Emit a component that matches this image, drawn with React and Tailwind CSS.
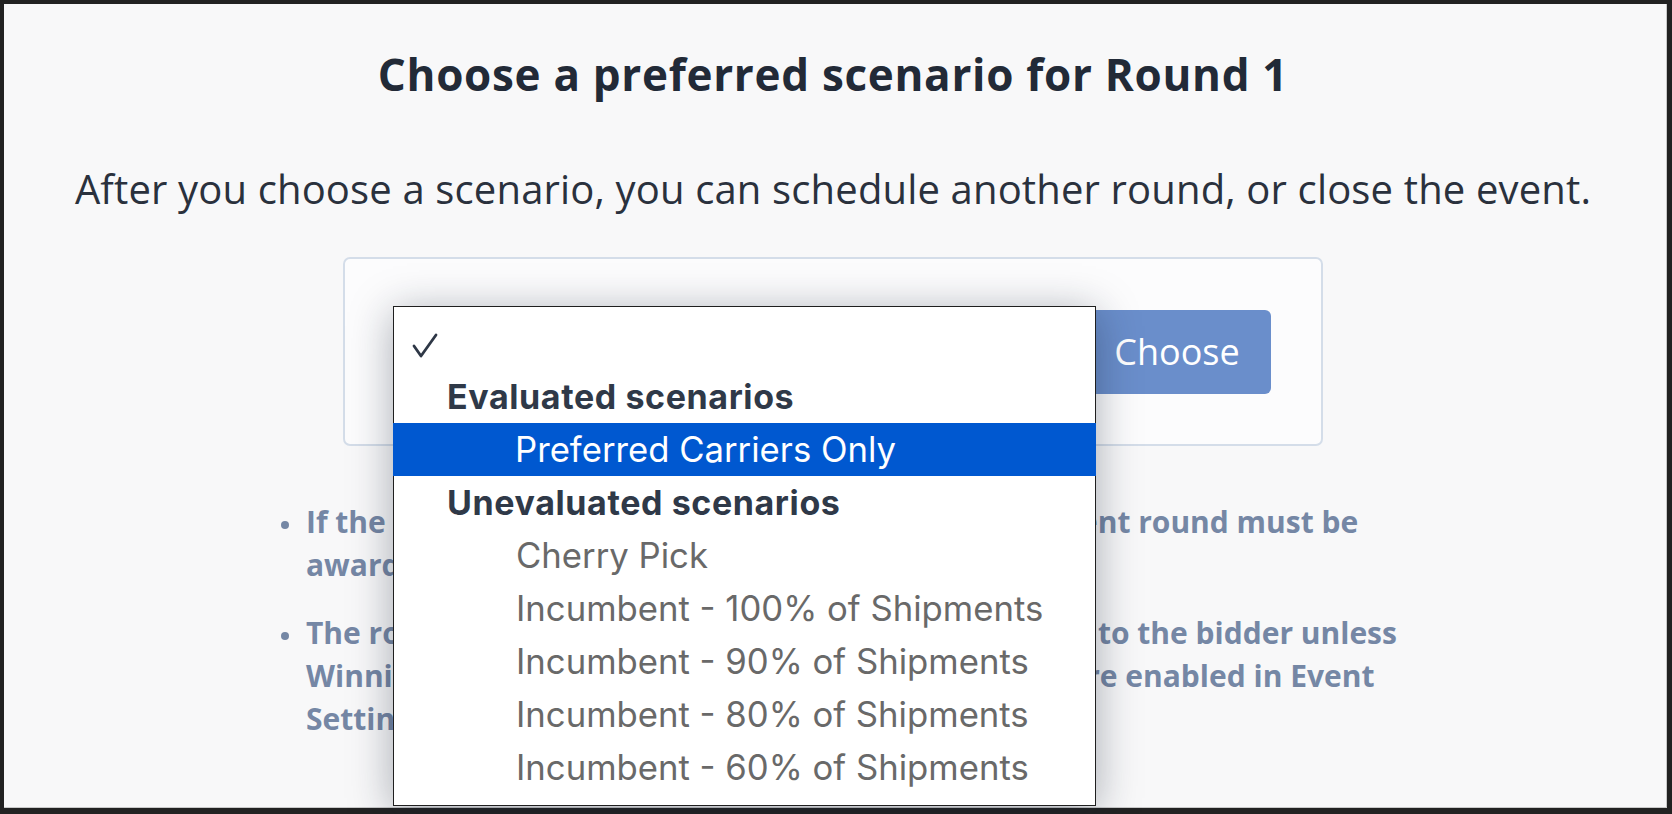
import React from 'react';

const OPTIONS = [
  { kind: 'check' },
  { kind: 'group', label: 'Evaluated scenarios' },
  { kind: 'item', label: 'Preferred Carriers Only', selected: true },
  { kind: 'group', label: 'Unevaluated scenarios' },
  { kind: 'item', label: 'Cherry Pick' },
  { kind: 'item', label: 'Incumbent - 100% of Shipments' },
  { kind: 'item', label: 'Incumbent - 90% of Shipments' },
  { kind: 'item', label: 'Incumbent - 80% of Shipments' },
  { kind: 'item', label: 'Incumbent - 60% of Shipments' },
];

function CheckMark() {
  return (
    <svg width="26" height="26" viewBox="0 0 26 26" fill="none">
      <polyline points="2,13 9,23 24,2" stroke="#2e3746" strokeWidth="2.8" strokeLinecap="round" strokeLinejoin="round" />
    </svg>
  );
}

function ScenarioMenu() {
  return (
    <div
      className="absolute left-[48px] top-[47px] z-10 w-[703px] h-[500px] bg-white border border-[#1f1f1f] pt-[10px] pb-[12px] shadow-[0_6px_40px_rgba(20,30,50,0.36)]"
      style={{ fontFamily: 'Inter, "Liberation Sans", sans-serif' }}
    >
      {OPTIONS.map((opt, i) => {
        if (opt.kind === 'check') {
          return (
            <div key={i} className="h-[53px] flex items-center pl-[18px] pt-[4px]">
              <CheckMark />
            </div>
          );
        }
        if (opt.kind === 'group') {
          return (
            <div key={i} className="h-[53px] flex items-center pl-[53px] text-[34px] font-bold text-[#2f3948] tracking-[0.6px]">
              {opt.label}
            </div>
          );
        }
        return (
          <div
            key={i}
            className={
              opt.selected
                ? 'h-[53px] flex items-center pl-[122px] text-[34.7px] text-white bg-[#0058d0] -mx-px'
                : 'h-[53px] flex items-center pl-[122px] text-[34.7px] text-[#696969]'
            }
          >
            {opt.label}
          </div>
        );
      })}
    </div>
  );
}

function ChooseCard() {
  return (
    <div className="relative mt-[40px] w-[980px] h-[189px] border-2 border-[#d4dde9] rounded-[7px] bg-[#fcfcfd]">
      <div className="h-full flex items-center px-[50px] gap-[23px]">
        <div className="flex-1 h-[84px] rounded-[6px] border border-[#c9d2de] bg-white" />
        <button className="w-[188px] h-[84px] rounded-[6px] bg-[#6a8ecb] text-white text-[36px] leading-none">
          Choose
        </button>
      </div>
      <ScenarioMenu />
    </div>
  );
}

function Note({ children }) {
  return (
    <li className="flex items-start gap-[17px]">
      <span className="mt-[21px] w-[8px] h-[8px] rounded-full bg-[#7587a5] shrink-0" />
      <span className="whitespace-nowrap">{children}</span>
    </li>
  );
}

export default function App() {
  return (
    <div
      className="h-screen w-full bg-[#222222] border-t-[4px] border-l-[4px] border-r-[5px] border-b-[6px] border-[#222222]"
      style={{ fontFamily: '"Open Sans", "Noto Sans", sans-serif' }}
    >
      <div className="h-full bg-[#f8f8f9] border-r border-b border-[#c9c9c9] flex flex-col items-center pr-[4px]">
        <h1 className="mt-[43px] text-[44px] leading-[54px] font-bold tracking-[0.7px] text-[#222a37]">
          Choose a preferred scenario for Round 1
        </h1>
        <p className="mt-[60px] text-[40px] leading-[56px] tracking-[0.15px] text-[#2a313d]">
          After you choose a scenario, you can schedule another round, or close the event.
        </p>

        <ChooseCard />

        <ul className="self-start ml-[277px] mt-[54px] flex flex-col gap-[25px] text-[30px] leading-[43px] font-bold text-[#7587a5]">
          <Note>
            If the event has multiple rounds, only the most current round must be
            <br />
            awarded.
          </Note>
          <Note>
            The round's preferred scenario is never made visible to the bidder unless
            <br />
            Winning Bid Notifications and Award Notifications are enabled in Event
            <br />
            Settings.
          </Note>
        </ul>
      </div>
    </div>
  );
}
